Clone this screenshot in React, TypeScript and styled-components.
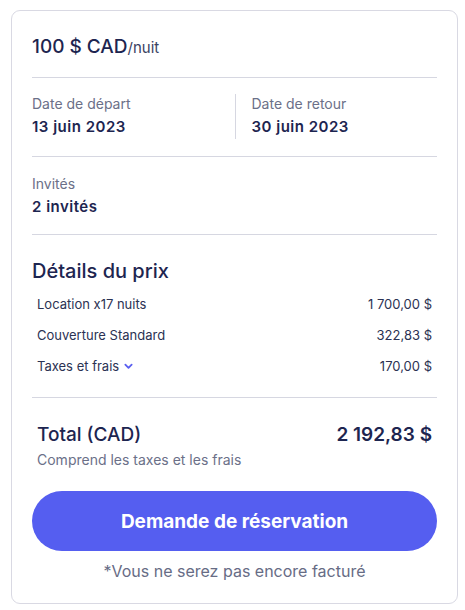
import React from "react";
import styled, { createGlobalStyle } from "styled-components";

const Global = createGlobalStyle`
  html, body { margin: 0; padding: 0; background: #fff; }
  body { font-family: Inter, "Noto Sans", sans-serif; -webkit-font-smoothing: antialiased; }
  * { box-sizing: border-box; }
`;

const Page = styled.div`
  padding: 10px 8px 6px 11px;
`;

const Card = styled.div`
  width: 447px;
  border: 1px solid #d9d9e3;
  border-radius: 9px;
  padding: 0 20px 0 20px;
  background: #fff;
`;

const PriceLine = styled.div`
  height: 66px;
  display: flex;
  align-items: baseline;
  padding-top: 24px;
  color: #1d2550;
`;

const Price = styled.span`
  font-size: 19px;
  font-weight: 500;
`;

const Per = styled.span`
  font-size: 15px;
  color: #3b4262;
`;

const Divider = styled.div`
  height: 1px;
  background: #d6d7e1;
`;

const DatesRow = styled.div`
  display: grid;
  grid-template-columns: 1fr 1fr;
  padding: 16px 0 17px;
`;

const Field = styled.div<{ $divided?: boolean }>`
  display: flex;
  flex-direction: column;
  gap: 4px;
  ${(p) => (p.$divided ? "border-left: 1px solid #d6d7e1; padding-left: 16px;" : "")}
  min-height: 45px;
`;

const Label = styled.span`
  font-size: 14px;
  color: #6b7088;
  line-height: 19px;
`;

const Value = styled.span`
  font-size: 15px;
  font-weight: 600;
  letter-spacing: 0.5px;
  color: #1d2550;
  line-height: 19px;
`;

const GuestsBlock = styled.div`
  padding: 17px 0 18px;
  display: flex;
  flex-direction: column;
  gap: 4px;
`;

const SectionTitle = styled.h2`
  margin: 0;
  font-size: 20px;
  font-weight: 500;
  color: #1d2550;
  padding: 24px 0 5px;
  line-height: 24px;
`;

const Rows = styled.div`
  display: flex;
  flex-direction: column;
  padding: 0 5px 16px;
`;

const Row = styled.div`
  height: 31px;
  display: flex;
  justify-content: space-between;
  align-items: center;
  font-size: 13px;
  color: #2b3253;
`;

const RowLabel = styled.span`
  display: flex;
  align-items: center;
  gap: 5px;
`;

const Chevron = styled.svg`
  width: 9px;
  height: 9px;
  color: #5a5ff0;
  margin-top: 1px;
`;

const TotalBlock = styled.div`
  padding: 25px 5px 22px;
`;

const TotalRow = styled.div`
  display: flex;
  justify-content: space-between;
  align-items: baseline;
  font-size: 19px;
  font-weight: 600;
  color: #1d2550;
  line-height: 24px;
`;

const TotalLabel = styled.span`
  font-weight: 500;
`;

const Note = styled.div`
  margin-top: 4px;
  font-size: 14px;
  color: #6b7088;
  line-height: 18px;
`;

const Button = styled.button`
  width: 100%;
  height: 60px;
  border: none;
  border-radius: 30px;
  background: #555ef0;
  color: #fff;
  font-family: inherit;
  font-size: 19px;
  font-weight: 700;
  cursor: pointer;
`;

const Footnote = styled.div`
  text-align: center;
  font-size: 16px;
  color: #676c85;
  padding: 10px 0 22px;
  line-height: 20px;
`;

export default function App() {
  return (
    <Page>
      <Global />
      <Card>
        <PriceLine>
          <Price>100 $ CAD</Price>
          <Per>/nuit</Per>
        </PriceLine>
        <Divider />
        <DatesRow>
          <Field>
            <Label>Date de départ</Label>
            <Value>13 juin 2023</Value>
          </Field>
          <Field $divided>
            <Label>Date de retour</Label>
            <Value>30 juin 2023</Value>
          </Field>
        </DatesRow>
        <Divider />
        <GuestsBlock>
          <Label>Invités</Label>
          <Value>2 invités</Value>
        </GuestsBlock>
        <Divider />
        <SectionTitle>Détails du prix</SectionTitle>
        <Rows>
          <Row>
            <span>Location x17 nuits</span>
            <span>1 700,00 $</span>
          </Row>
          <Row>
            <span>Couverture Standard</span>
            <span>322,83 $</span>
          </Row>
          <Row>
            <RowLabel>
              Taxes et frais
              <Chevron viewBox="0 0 10 10" fill="none">
                <path d="M1.5 3 L5 6.5 L8.5 3" stroke="currentColor" strokeWidth="2" strokeLinecap="round" strokeLinejoin="round" />
              </Chevron>
            </RowLabel>
            <span>170,00 $</span>
          </Row>
        </Rows>
        <Divider />
        <TotalBlock>
          <TotalRow>
            <TotalLabel>Total (CAD)</TotalLabel>
            <span>2 192,83 $</span>
          </TotalRow>
          <Note>Comprend les taxes et les frais</Note>
        </TotalBlock>
        <Button>Demande de réservation</Button>
        <Footnote>*Vous ne serez pas encore facturé</Footnote>
      </Card>
    </Page>
  );
}
